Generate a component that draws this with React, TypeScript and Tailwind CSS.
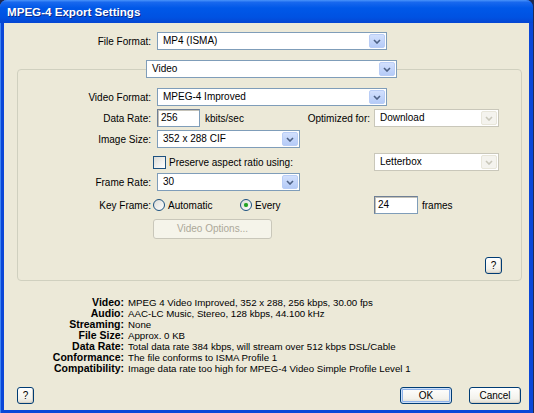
import React from "react";

function Chevron({ disabled }: { disabled?: boolean }) {
  return (
    <svg width="8" height="5" viewBox="0 0 8 5">
      <path
        d="M1 1 L4 4 L7 1"
        fill="none"
        stroke={disabled ? "#c9c7ba" : "#4d6185"}
        strokeWidth="1.6"
      />
    </svg>
  );
}

function Combo({
  w,
  text,
  disabled,
}: {
  w: string;
  text: string;
  disabled?: boolean;
}) {
  return (
    <div
      className={`flex h-[18px] ${w} items-stretch border bg-white ${
        disabled ? "border-[#c9c7ba]" : "border-[#7f9db9]"
      }`}
    >
      <div className="flex flex-1 items-center pl-[5px] leading-none">{text}</div>
      <div
        className={`m-px flex w-[16px] items-center justify-center rounded-[2px] border ${
          disabled
            ? "border-[#e8e6da] bg-[#f4f3ee]"
            : "border-[#b9cdf6] bg-[linear-gradient(to_bottom,#d2e0fd,#b5cbf7)]"
        }`}
      >
        <Chevron disabled={disabled} />
      </div>
    </div>
  );
}

function TextBox({ w, text }: { w: string; text: string }) {
  return (
    <div
      className={`flex h-[18px] ${w} items-center border border-[#7f9db9] border-t-[#6f7f95] border-l-[#6f7f95] bg-white pl-[3px] leading-none shadow-[inset_1px_1px_0_#c4c2b8]`}
    >
      {text}
    </div>
  );
}

function Radio({ checked }: { checked?: boolean }) {
  return (
    <div className="flex h-[12px] w-[12px] items-center justify-center rounded-full border border-[#1c5180] bg-[linear-gradient(135deg,#dcdcd7,#ffffff)]">
      {checked && (
        <div className="h-[4px] w-[4px] rounded-full bg-[#21a121] shadow-[0_0_1px_#6fd36f]" />
      )}
    </div>
  );
}

function XPButton({
  w,
  h,
  children,
  def,
  disabled,
}: {
  w: string;
  h: string;
  children: React.ReactNode;
  def?: boolean;
  disabled?: boolean;
}) {
  const base = `flex ${w} ${h} items-center justify-center rounded-[3px] border leading-none`;
  if (disabled)
    return (
      <div className={`${base} border-[#c9c7ba] bg-[#f5f4ea] text-[#aca899]`}>
        {children}
      </div>
    );
  return (
    <div
      className={`${base} border-[#003c74] bg-[linear-gradient(to_bottom,#ffffff,#f3f2ec_70%,#dedbd0)] ${
        def
          ? "shadow-[inset_0_0_0_1px_#cee0f8,inset_0_0_0_2px_#8fb3ea]"
          : "shadow-[inset_-1px_-1px_0_#d6d0c5]"
      }`}
    >
      {children}
    </div>
  );
}

const summary: [string, string][] = [
  ["Video:", "MPEG 4 Video Improved, 352 x 288, 256 kbps, 30.00 fps"],
  ["Audio:", "AAC-LC Music, Stereo, 128 kbps, 44.100 kHz"],
  ["Streaming:", "None"],
  ["File Size:", "Approx. 0 KB"],
  ["Data Rate:", "Total data rate 384 kbps, will stream over 512 kbps DSL/Cable"],
  ["Conformance:", "The file conforms to ISMA Profile 1"],
  ["Compatibility:", "Image data rate too high for MPEG-4 Video Simple Profile Level 1"],
];

export default function App() {
  return (
    <div className="flex h-[413px] w-[534px] bg-[#1d2a52] font-['Liberation_Sans',Arial,sans-serif] text-[10px] text-black">
      <div className="flex h-[413px] w-[533px] flex-col overflow-hidden rounded-t-[7px] bg-[#0a47d8] shadow-[inset_1px_0_0_#3f84f2]">
        {/* Title bar */}
        <div className="flex h-[23px] shrink-0 items-center bg-[linear-gradient(to_bottom,#4a94fa_0%,#1868ee_10%,#0058e8_35%,#0052e2_75%,#0546d2_100%)] pl-[7px]">
          <span className="text-[11.6px] font-bold text-white [text-shadow:1px_1px_0_#0a2a8a]">
            MPEG-4 Export Settings
          </span>
        </div>

        {/* Body */}
        <div className="mx-[4px] mb-[3px] flex flex-1 flex-col bg-[#ece9d8]">
          {/* File format */}
          <div className="mt-[9px] flex h-[18px] items-center">
            <div className="w-[147px] text-right">File Format:</div>
            <div className="ml-[6px]">
              <Combo w="w-[230px]" text="MP4 (ISMA)" />
            </div>
          </div>

          {/* Group */}
          <fieldset className="ml-[13px] mt-[10px] w-[505px] rounded-[4px] border border-[#d0d0bf] pb-[6px]">
            <legend className="ml-[128px] p-0">
              <Combo w="w-[251px]" text="Video" />
            </legend>

            {/* Video Format */}
            <div className="mt-[10px] flex h-[18px] items-center">
              <div className="w-[133px] text-right">Video Format:</div>
              <div className="ml-[6px]">
                <Combo w="w-[230px]" text="MPEG-4 Improved" />
              </div>
            </div>

            {/* Data Rate */}
            <div className="mt-[3px] flex h-[18px] items-center">
              <div className="w-[133px] text-right">Data Rate:</div>
              <div className="ml-[6px]">
                <TextBox w="w-[43px]" text="256" />
              </div>
              <div className="w-[100px] pl-[5px]">kbits/sec</div>
              <div className="w-[74px] pr-[4px] text-right">Optimized for:</div>
              <Combo w="w-[125px]" text="Download" disabled />
            </div>

            {/* Image Size */}
            <div className="mt-[3px] flex h-[18px] items-center">
              <div className="w-[133px] text-right">Image Size:</div>
              <div className="ml-[6px]">
                <Combo w="w-[143px]" text="352 x 288 CIF" />
              </div>
            </div>

            {/* Preserve */}
            <div className="mt-[5px] flex h-[18px] items-center">
              <div className="w-[135px]" />
              <div className="flex w-[221px] items-center">
                <div className="h-[13px] w-[13px] border border-[#1c5180] bg-[linear-gradient(135deg,#dcdcd7,#ffffff)]" />
                <span className="ml-[3px]">Preserve aspect ratio using:</span>
              </div>
              <Combo w="w-[125px]" text="Letterbox" disabled />
            </div>

            {/* Frame Rate */}
            <div className="mt-[2px] flex h-[18px] items-center">
              <div className="w-[133px] text-right">Frame Rate:</div>
              <div className="ml-[6px]">
                <Combo w="w-[143px]" text="30" />
              </div>
            </div>

            {/* Key Frame */}
            <div className="mt-[5px] flex h-[18px] items-center">
              <div className="w-[133px] text-right">Key Frame:</div>
              <div className="ml-[2px] flex w-[87px] items-center">
                <Radio />
                <span className="ml-[3px]">Automatic</span>
              </div>
              <div className="flex w-[134px] items-center">
                <Radio checked />
                <span className="ml-[3px]">Every</span>
              </div>
              <TextBox w="w-[44px]" text="24" />
              <span className="ml-[4px]">frames</span>
            </div>

            {/* Video Options */}
            <div className="mt-[5px] flex">
              <div className="ml-[135px]">
                <XPButton w="w-[119px]" h="h-[20px]" disabled>
                  Video Options...
                </XPButton>
              </div>
            </div>

            {/* Help */}
            <div className="mt-[18px] flex">
              <div className="ml-[467px]">
                <XPButton w="w-[17px]" h="h-[17px]">
                  ?
                </XPButton>
              </div>
            </div>
          </fieldset>

          {/* Summary */}
          <div className="mt-[16px] grid grid-cols-[120px_1fr] gap-x-[4px] leading-[11px]">
            {summary.map(([k, v]) => (
              <React.Fragment key={k}>
                <div className="text-right text-[10.5px] font-bold">{k}</div>
                <div className="text-[9.7px]">{v}</div>
              </React.Fragment>
            ))}
          </div>

          {/* Bottom buttons */}
          <div className="mt-[13px] flex items-center">
            <div className="ml-[13px]">
              <XPButton w="w-[17px]" h="h-[17px]">
                ?
              </XPButton>
            </div>
            <div className="flex-1" />
            <XPButton w="w-[52px]" h="h-[17px]" def>
              OK
            </XPButton>
            <div className="ml-[17px] mr-[8px]">
              <XPButton w="w-[52px]" h="h-[17px]">
                Cancel
              </XPButton>
            </div>
          </div>
        </div>
      </div>
    </div>
  );
}
